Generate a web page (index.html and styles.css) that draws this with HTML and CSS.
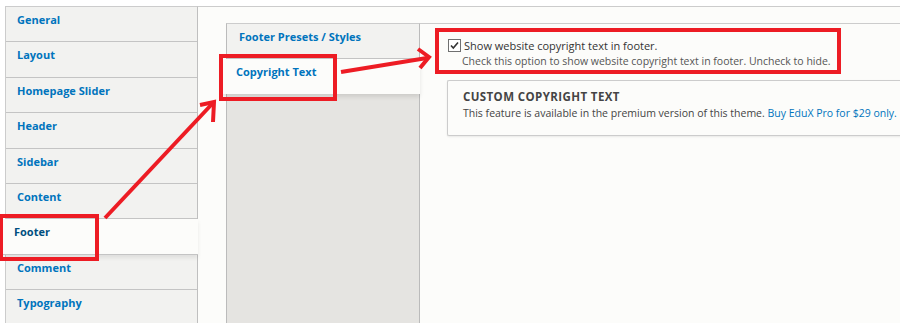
FILE: index.html
```html
<!DOCTYPE html>
<html lang="en">

<head>
    <meta charset="UTF-8">
    <meta name="viewport" content="width=device-width, initial-scale=1.0">
    <title>Theme settings - Footer</title>
    <link rel="stylesheet" href="styles.css">
</head>

<body>
    <div class="page">
        <!-- Main vertical tabs -->
        <ul class="side-tabs">
            <li><a href="#">General</a></li>
            <li><a href="#">Layout</a></li>
            <li><a href="#">Homepage Slider</a></li>
            <li><a href="#">Header</a></li>
            <li><a href="#">Sidebar</a></li>
            <li><a href="#">Content</a></li>
            <li class="selected"><a href="#">Footer</a></li>
            <li><a href="#">Comment</a></li>
            <li><a href="#">Typography</a></li>
        </ul>

        <div class="panel">
            <!-- Footer sub tabs -->
            <div class="sub-tabs">
                <ul class="sub-menu">
                    <li><a href="#">Footer Presets / Styles</a></li>
                    <li class="selected"><a href="#">Copyright Text</a></li>
                </ul>

                <div class="sub-pane">
                    <div class="form-item">
                        <label class="check">
                            <svg class="checkbox" width="13" height="13" viewBox="0 0 13 13">
                                <rect x="0.5" y="0.5" width="12" height="12" fill="#fff" stroke="#707070"/>
                                <path d="M3 6.5 L5.3 9 L10 3.5" fill="none" stroke="#333" stroke-width="1.6"/>
                            </svg>
                            Show website copyright text in footer.
                        </label>
                        <p class="description">Check this option to show website copyright text in footer. Uncheck to hide.</p>
                    </div>

                    <div class="premium">
                        <h3>Custom copyright text</h3>
                        <p>This feature is available in the premium version of this theme. <a href="#">Buy EduX Pro for $29 only.</a></p>
                    </div>
                </div>
            </div>
        </div>
    </div>

    <!-- Red annotation marks drawn over the screenshot -->
    <svg class="marks" width="900" height="323" viewBox="0 0 900 323">
        <g fill="none" stroke="#ed1c24" stroke-width="4">
            <rect x="1" y="216" width="96" height="43"/>
            <rect x="221" y="56" width="114" height="43"/>
            <rect x="437" y="30" width="402" height="42"/>
            <line x1="105" y1="218" x2="212" y2="104"/>
            <polyline points="200,105 214,102 213,122"/>
            <line x1="341" y1="72" x2="427" y2="58"/>
            <polyline points="418,49 429,57 420,68"/>
        </g>
    </svg>
</body>

</html>
```

FILE: styles.css
```css
* {
    margin: 0;
    padding: 0;
    box-sizing: border-box;
}

body {
    background-color: #fff;
    font-family: "Open Sans", "DejaVu Sans", sans-serif;
    font-size: 11px;
    color: #333;
    height: 323px;
    overflow: hidden;
    position: relative;
}

a {
    text-decoration: none;
    color: #0074bd;
}

ul {
    list-style: none;
}

.page {
    display: flex;
    padding: 6px 0 0 5px;
    height: 100%;
}

/* Left menu */
.side-tabs {
    width: 193px;
    flex-shrink: 0;
    background-color: #f2f2f0;
    border-top: 1px solid #ccc;
    border-left: 1px solid #ccc;
    border-right: 1px solid #bfbfbf;
    position: relative;
    z-index: 1;
}

.side-tabs li {
    height: 35.4px;
    border-bottom: 1px solid #c4c4c4;
    padding: 5px 0 0 11px;
}

.side-tabs li a {
    font-weight: bold;
}

.side-tabs li.selected {
    background-color: #fcfcfa;
    margin-right: -1px;
    margin-left: -5px;
    padding-left: 13px;
    border-left: none;
    box-shadow: 0 3px 4px rgba(0, 0, 0, 0.08);
}

.side-tabs li.selected a {
    color: #004f80;
}

/* Right side */
.panel {
    flex: 1;
    min-width: 0;
    background-color: #fcfcfa;
    border-top: 1px solid #ccc;
    padding: 16px 0 0 28px;
}

.sub-tabs {
    display: flex;
    height: 100%;
}

.sub-menu {
    width: 194px;
    flex-shrink: 0;
    background-color: #e5e4e1;
    border-top: 1px solid #ccc;
    border-left: 1px solid #bbb;
    border-right: 1px solid #bbb;
}

.sub-menu li {
    height: 35px;
    background-color: #f2f2f0;
    border-bottom: 1px solid #c4c4c4;
    padding: 5px 0 0 12px;
}

.sub-menu li a {
    font-weight: bold;
}

.sub-menu li.selected {
    background-color: #fcfcfa;
    margin-left: -5px;
    padding-left: 14px;
    margin-right: -1px;
    border-bottom: none;
    box-shadow: 0 3px 4px rgba(0, 0, 0, 0.1);
    position: relative;
}

.sub-pane {
    flex: 1;
    min-width: 0;
    border-top: 1px solid #ccc;
    padding: 13px 0 0 28px;
}

.form-item {
    height: 43px;
}

.check {
    display: flex;
    align-items: center;
    gap: 3px;
    font-size: 11px;
    color: #333;
    height: 17px;
}

.description {
    margin: 0 0 0 14px;
    font-size: 10.5px;
    color: #555;
}

.premium {
    border: 1px solid #ccc;
    border-right: none;
    border-radius: 2px 0 0 2px;
    box-shadow: 0 1px 2px rgba(0, 0, 0, 0.08);
    padding: 8px 15px 15px;
    margin: 0 -40px 0 -1px;
    white-space: nowrap;
}

.premium h3 {
    font-size: 11.5px;
    font-weight: bold;
    text-transform: uppercase;
    letter-spacing: 0.4px;
    color: #444;
    margin-bottom: 2px;
}

.premium p {
    font-size: 10.5px;
    color: #444;
}

/* Annotation overlay */
.marks {
    position: absolute;
    left: 0;
    top: 0;
    z-index: 10;
    pointer-events: none;
}
```
